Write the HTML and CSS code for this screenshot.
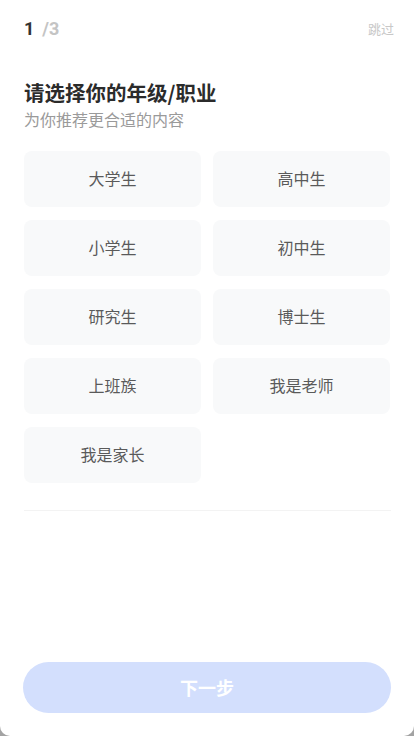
FILE: index.html
```html
<!DOCTYPE html>
<html lang="zh-CN">
<head>
    <meta charset="UTF-8">
    <meta name="viewport" content="width=device-width, initial-scale=1.0">
    <link rel="stylesheet" href="styles.css">
    <title>选择年级/职业</title>
</head>
<body>
    <div class="page">
        <div class="top">
            <div class="step"><span class="step-now">1</span><span class="step-all">/3</span></div>
            <a class="skip" href="#">跳过</a>
        </div>

        <h2 class="title">请选择你的年级/职业</h2>
        <p class="sub">为你推荐更合适的内容</p>

        <div class="grid">
            <div class="item">大学生</div>
            <div class="item">高中生</div>
            <div class="item">小学生</div>
            <div class="item">初中生</div>
            <div class="item">研究生</div>
            <div class="item">博士生</div>
            <div class="item">上班族</div>
            <div class="item">我是老师</div>
            <div class="item">我是家长</div>
        </div>
        <hr class="line">

        <div class="space"></div>
        <button class="next" disabled>下一步</button>
    </div>
</body>
</html>
```

FILE: styles.css
```css
*{box-sizing:border-box;}
html{background:#a3a3a3;}
body{margin:0;font-family:Roboto,"Noto Sans CJK SC",sans-serif;}
.page{height:736px;background:#fff;border-radius:0 0 10px 10px;padding:0 23px 23px 24px;display:flex;flex-direction:column;}
.top{height:56px;display:flex;align-items:center;justify-content:space-between;margin-right:-3px;}
.step-now{font-size:18px;font-weight:700;color:#333;}
.step-all{font-size:18px;font-weight:700;color:#c4c4c4;margin-left:8px;}
.skip{font-family:"Noto Sans CJK SC",sans-serif;font-size:13px;color:#c8c8c8;text-decoration:none;}
.title{margin:22px 0 0;font-family:"Noto Sans CJK SC",sans-serif;font-size:20.5px;line-height:28px;font-weight:700;color:#2b2b2b;}
.sub{margin:2px 0 0;font-family:"Noto Sans CJK SC",sans-serif;font-size:16px;line-height:22px;color:#9a9a9a;}
.grid{margin-top:21px;display:grid;grid-template-columns:177px 177px;column-gap:12px;row-gap:13px;}
.item{height:56px;padding-bottom:3px;border-radius:8px;background:#f8f9fa;display:flex;align-items:center;justify-content:center;font-family:"Noto Sans CJK SC",sans-serif;font-size:16px;color:#5a5a5a;}
.line{margin:27px 0 0;border:0;border-top:1px solid #f3f3f3;}
.space{flex:1;}
.next{height:51px;border:0;border-radius:26px;background:#d3dffd;color:#fff;font-family:"Noto Sans CJK SC",sans-serif;font-size:18px;font-weight:700;margin-left:-1px;padding-bottom:2px;}
```
